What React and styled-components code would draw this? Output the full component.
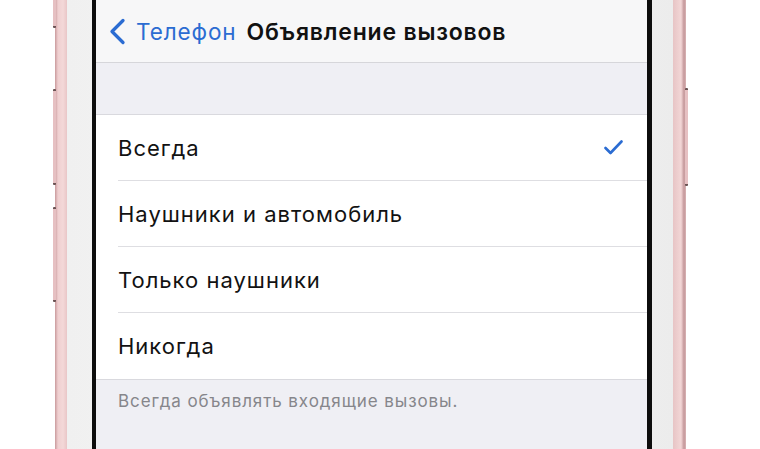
import React from 'react';
import styled, { createGlobalStyle } from 'styled-components';

const GlobalStyle = createGlobalStyle`
  html, body {
    margin: 0;
    padding: 0;
    background: #ffffff;
  }
  body {
    font-family: Inter, "Noto Sans", "Liberation Sans", sans-serif;
    -webkit-font-smoothing: antialiased;
  }
`;

const Page = styled.div`
  display: flex;
  height: 449px;
  overflow: hidden;
  padding-left: 55px;
  background: #ffffff;
`;

/* rose gold edge of the phone */
const Shell = styled.div`
  position: relative;
  display: flex;
  width: 631px;
  height: 100%;
  box-sizing: border-box;
  padding: 0 13px 0 12px;
  background: linear-gradient(
    90deg,
    #c99a9c 0px,
    #efcfd0 3px,
    #f3d8d8 8px,
    #e9c6c7 12px,
    #f2f2f2 12px,
    #f2f2f2 calc(100% - 13px),
    #e7c4c5 calc(100% - 13px),
    #f2d6d6 calc(100% - 5px),
    #c4979a calc(100% - 2px),
    #d9b4b5 100%
  );
`;

/* silver glass band between the metal and the black bezel */
const Band = styled.div`
  display: flex;
  flex: 1;
  padding: 0 21px 0 25px;
  background: linear-gradient(90deg, #f0f0f0 0%, #f7f7f7 40%, #f7f7f7 60%, #ececec 100%);
`;

const Bezel = styled.div`
  display: flex;
  flex: 1;
  padding: 0 5px 0 4px;
  background: #0d0d0d;
`;

const SideButton = styled.div`
  position: absolute;
  top: ${p => p.$top}px;
  height: ${p => p.$height}px;
  ${p => (p.$side === 'left' ? 'left: -2px;' : 'right: -2px;')}
  width: 3px;
  background: #e6c0c2;
  border-top: 2px solid #6b5354;
  border-bottom: 2px solid #6b5354;
  border-radius: 1px;
`;

const Screen = styled.div`
  display: flex;
  flex-direction: column;
  flex: 1;
  background: #efeff4;
  overflow: hidden;
`;

const NavBar = styled.div`
  display: flex;
  align-items: center;
  gap: 10px;
  height: 63px;
  padding: 1px 0 0 13px;
  box-sizing: border-box;
  background: #f7f7f8;
  border-bottom: 1px solid #d6d6da;
`;

const BackButton = styled.div`
  display: flex;
  align-items: center;
  gap: 10px;
  color: #2b6cd2;
  font-size: 22.5px;
  letter-spacing: 0.9px;
`;

const Title = styled.div`
  color: #111111;
  font-size: 23px;
  font-weight: 600;
  letter-spacing: 0.8px;
`;

const Spacer = styled.div`
  height: 51px;
  border-bottom: 1px solid #d9d9de;
`;

const List = styled.div`
  background: #ffffff;
  border-bottom: 1px solid #d9d9de;
`;

const Row = styled.div`
  display: flex;
  padding-left: 22px;
`;

const RowInner = styled.div`
  display: flex;
  flex: 1;
  align-items: center;
  justify-content: space-between;
  height: ${p => (p.$last ? 66 : 65)}px;
  padding-right: 24px;
  border-bottom: ${p => (p.$last ? 'none' : '1px solid #dedee2')};
  color: #121212;
  font-size: 22px;
  letter-spacing: 1px;
`;

const Footer = styled.div`
  padding: 11px 22px;
  color: #86868b;
  font-size: 17px;
  letter-spacing: 0.9px;
`;

const Chevron = () => (
  <svg width="17" height="27" viewBox="0 0 17 27">
    <path
      d="M14 2.5 L3 13.5 L14 24.5"
      fill="none"
      stroke="#2b6cd2"
      strokeWidth="3.3"
      strokeLinecap="round"
      strokeLinejoin="round"
    />
  </svg>
);

const Check = () => (
  <svg width="19" height="15" viewBox="0 0 19 15">
    <path
      d="M1.5 8 L6.5 13 L17.5 1.5"
      fill="none"
      stroke="#2b6cd2"
      strokeWidth="2.6"
      strokeLinecap="round"
      strokeLinejoin="round"
    />
  </svg>
);

const options = [
  { label: 'Всегда', checked: true },
  { label: 'Наушники и автомобиль' },
  { label: 'Только наушники' },
  { label: 'Никогда' },
];

const App = () => {
  return (
    <>
      <GlobalStyle />
      <Page>
        <Shell>
          <SideButton $side="left" $top={-10} $height={34} />
          <SideButton $side="left" $top={89} $height={92} />
          <SideButton $side="left" $top={207} $height={91} />
          <SideButton $side="right" $top={88} $height={94} />
          <Band>
            <Bezel>
              <Screen>
                <NavBar>
                  <BackButton>
                    <Chevron />
                    <span>Телефон</span>
                  </BackButton>
                  <Title>Объявление вызовов</Title>
                </NavBar>
                <Spacer />
                <List>
                  {options.map((o, i) => (
                    <Row key={o.label}>
                      <RowInner $last={i === options.length - 1}>
                        <span>{o.label}</span>
                        {o.checked && <Check />}
                      </RowInner>
                    </Row>
                  ))}
                </List>
                <Footer>Всегда объявлять входящие вызовы.</Footer>
              </Screen>
            </Bezel>
          </Band>
        </Shell>
      </Page>
    </>
  );
};

export default App;
